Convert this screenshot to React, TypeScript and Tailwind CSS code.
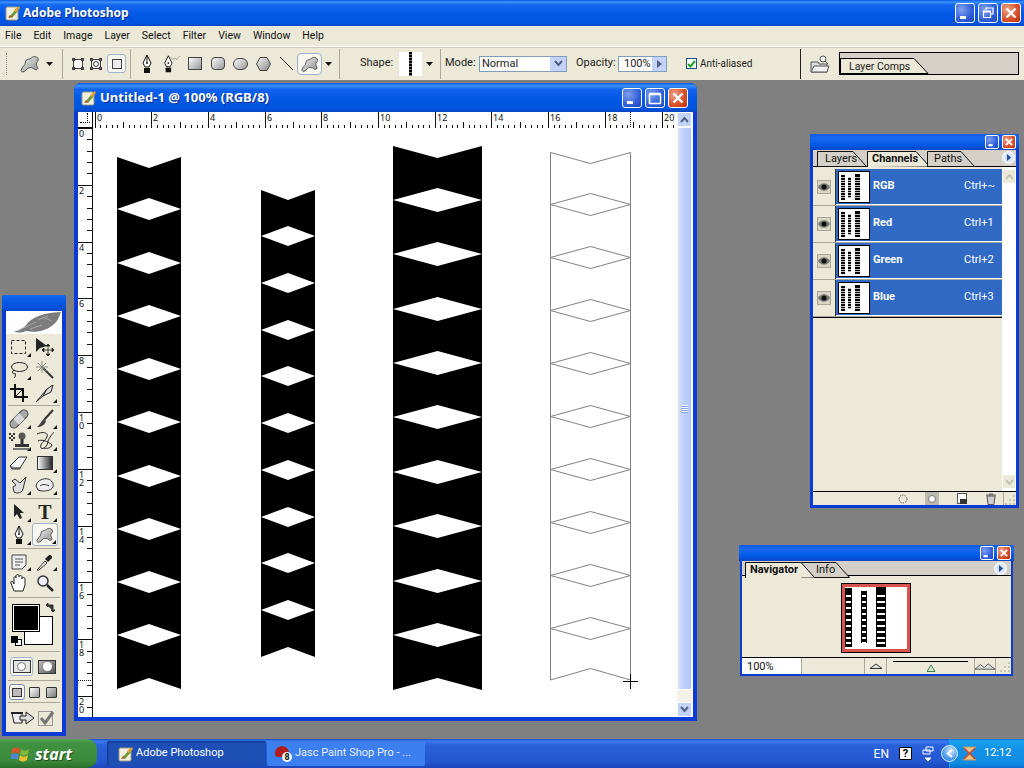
import type { ReactNode } from "react";

const blob =
  "M2 18C4 13 7 13 7 9 7 5 11 7 14 4 16 2 20 3 21 5 22 8 19 9 19 11 19 14 22 15 20 17 18 19 16 15 12 15 9 15 7 20 4 20 3 20 2 19 2 18Z";

function Defs() {
  return (
    <svg className="absolute w-0 h-0">
      <defs>
        <linearGradient id="steel" x1="0" y1="0" x2="1" y2="1">
          <stop offset="0" stopColor="#f4f4f4" />
          <stop offset="1" stopColor="#8a8a8a" />
        </linearGradient>
        <linearGradient id="fade" x1="0" y1="0" x2="1" y2="0">
          <stop offset="0" stopColor="#fff" />
          <stop offset="1" stopColor="#222" />
        </linearGradient>
      </defs>
    </svg>
  );
}

function Blob({ size = 24 }: { size?: number }) {
  return (
    <svg width={size} height={size * 0.9} viewBox="0 0 24 22">
      <path d={blob} fill="url(#steel)" stroke="#444" strokeWidth="1" />
    </svg>
  );
}

function Pen() {
  return (
    <svg width="16" height="20" viewBox="0 0 16 20">
      <path d="M8 1 12 9 10 13H6L4 9Z" fill="#fff" stroke="#111" />
      <path d="M8 2V8" stroke="#111" />
      <circle cx="8" cy="9" r="1" fill="#111" />
      <rect x="5" y="14" width="6" height="5" fill="#111" />
    </svg>
  );
}

function FreePen() {
  return (
    <svg width="24" height="20" viewBox="0 0 24 20">
      <path d="M8 1 12 9 10 13H6L4 9Z" fill="#fff" stroke="#111" />
      <circle cx="8" cy="9" r="1" fill="#111" />
      <rect x="5" y="14" width="6" height="5" fill="#111" />
      <path d="M11 3 13 5 15 3 17 5 19 3 21 1" fill="none" stroke="#555" strokeDasharray="1 1" />
    </svg>
  );
}

function Caret({ className = "" }: { className?: string }) {
  return (
    <svg width="7" height="4" viewBox="0 0 7 4" className={className}>
      <path d="M0 0H7L3.500 4Z" fill="#111" />
    </svg>
  );
}

function WinButton({ kind, small }: { kind: "min" | "max" | "restore" | "close"; small?: boolean }) {
  const tone =
    kind === "close"
      ? "bg-[radial-gradient(circle_at_30%_30%,#f0a58c,#d8532e_55%,#b8300e)]"
      : "bg-[radial-gradient(circle_at_30%_30%,#7f9ff0,#2f5fd8_60%,#1c45c0)]";
  const size = small ? "w-[14px] h-[14px] rounded-[2px]" : "w-[20px] h-[20px] rounded-[3px]";
  return (
    <div className={`${size} ${tone} border border-white flex items-center justify-center shrink-0`}>
      <svg width={small ? 10 : 14} height={small ? 10 : 14} viewBox="0 0 14 14" fill="none" stroke="#fff">
        {kind === "min" && <path d="M2 11.500H8" strokeWidth="3" />}
        {kind === "max" && <path d="M1.500 3.500H12.500V12.500H1.500ZM1.500 2.500H12.500" strokeWidth="1.500" />}
        {kind === "restore" && <path d="M5 4V2H12V8H10M2.500 5H9.500V11.500H2.500ZM2.500 6H9.500" strokeWidth="1.200" />}
        {kind === "close" && <path d="M2.500 2.500 11.500 11.500M11.500 2.500 2.500 11.500" strokeWidth="2.400" />}
      </svg>
    </div>
  );
}

function PsLogo() {
  return (
    <svg width="16" height="16" viewBox="0 0 16 16" className="shrink-0">
      <rect x="1" y="2" width="12" height="13" rx="1.500" fill="#f3efe0" stroke="#9a9a80" />
      <path d="M4 12 11 4 13 6 7 13Z" fill="#6f9a3a" />
      <path d="M9 5 14 1 15 3 11 7Z" fill="#e3a12c" />
      <path d="M3 13 5 10 7 12Z" fill="#b5482a" />
    </svg>
  );
}

function TopRuler() {
  const ticks = Array.from({ length: 103 }, (_, i) => i);
  return (
    <svg width="584" height="16" className="block bg-white shrink-0">
      {ticks.map((i) => {
        const x = 1.5 + i * 5.67;
        const h = i % 10 === 0 ? 16 : i % 5 === 0 ? 6 : 3;
        return <rect key={i} x={Math.round(x)} y={16 - h} width="1" height={h} fill="#111" />;
      })}
      {ticks
        .filter((i) => i % 10 === 0)
        .map((i) => (
          <text key={i} x={Math.round(1.5 + i * 5.67) + 2} y="9" fontSize="9" fill="#111" fontFamily="Noto Sans, sans-serif">
            {i / 5}
          </text>
        ))}
      <path d="M537.500 0V16" stroke="#111" strokeDasharray="1 1" />
    </svg>
  );
}

function LeftRuler() {
  const ticks = Array.from({ length: 52 }, (_, i) => i);
  return (
    <svg width="15" height="589" className="block bg-white shrink-0">
      <rect x="14" y="0" width="1" height="589" fill="#111" />
      {ticks.map((i) => {
        const y = Math.round(i * 11.36);
        return <rect key={i} x={i % 5 === 0 ? 0 : 9} y={y} width={i % 5 === 0 ? 14 : 5} height="1" fill="#111" />;
      })}
      {ticks
        .filter((i) => i % 5 === 0)
        .map((i) => {
          const digits = String((i / 5) * 2).split("");
          return (
            <text key={i} fontSize="9" fill="#111" fontFamily="Noto Sans, sans-serif">
              {digits.map((d, n) => (
                <tspan key={n} x="1" y={Math.round(i * 11.36) + 9 + n * 8}>
                  {d}
                </tspan>
              ))}
            </text>
          );
        })}
      <path d="M0 552.500H14" stroke="#111" strokeDasharray="1 1" />
    </svg>
  );
}

type Col = {
  l: number;
  r: number;
  top: number;
  notch: number;
  half: number;
  centers: number[];
  peak: number;
  bottom: number;
};

const cols: Col[] = [
  { l: 117, r: 181, top: 157, notch: 168, half: 11, centers: [209, 263, 316, 369, 422, 476, 529, 582, 635], peak: 678, bottom: 689 },
  { l: 261, r: 315, top: 190, notch: 200, half: 10, centers: [236, 283, 330, 376, 423, 470, 517, 563, 610], peak: 647, bottom: 657 },
  { l: 393, r: 482, top: 146, notch: 158, half: 12, centers: [200, 254, 309, 363, 417, 472, 526, 581, 635], peak: 678, bottom: 690 },
];

function Diamond({ c, l, r, half }: { c: number; l: number; r: number; half: number }) {
  const m = (l + r) / 2;
  return <path d={`M${l} ${c}L${m} ${c - half}L${r} ${c}L${m} ${c + half}Z`} />;
}

function Drawing() {
  const outline = { l: 550.5, r: 630.5 };
  const mid = 590.5;
  return (
    <svg width="584" height="589" viewBox="93 128 584 589" className="block bg-white">
      {cols.map((c) => {
        const m = (c.l + c.r) / 2;
        return (
          <g key={c.l}>
            <path
              d={`M${c.l} ${c.top}L${m} ${c.notch}L${c.r} ${c.top}V${c.bottom}L${m} ${c.peak}L${c.l} ${c.bottom}Z`}
              fill="#000"
            />
            <g fill="#fff">
              {c.centers.map((y) => (
                <Diamond key={y} c={y} l={c.l} r={c.r} half={c.half} />
              ))}
            </g>
          </g>
        );
      })}
      <g fill="none" stroke="#808080">
        <path d={`M${outline.l} 152.500L${mid} 163.500L${outline.r} 152.500V680L${mid} 668.500L${outline.l} 680Z`} />
        {[204, 257, 310, 363, 416, 469, 522, 575, 628].map((y) => (
          <Diamond key={y} c={y + 0.5} l={outline.l} r={outline.r} half={11} />
        ))}
      </g>
      <path d="M623 681.500H638M630.500 674V689" stroke="#000" fill="none" />
    </svg>
  );
}

function ScrollButton({ up }: { up?: boolean }) {
  return (
    <div className="h-[15px] w-[15px] bg-[#c3d3f8] border border-white rounded-[2px] flex items-center justify-center shrink-0">
      <svg width="9" height="7" viewBox="0 0 9 7" fill="none" stroke="#4d6185" strokeWidth="2">
        <path d={up ? "M1 6 4.500 2 8 6" : "M1 1 4.500 5 8 1"} />
      </svg>
    </div>
  );
}

function Scrollbar() {
  return (
    <div className="w-[15px] h-full flex flex-col bg-[#f3f1e8] shrink-0">
      <ScrollButton up />
      <div className="flex-1 flex flex-col pb-[12px]">
        <div className="flex-1 bg-[linear-gradient(90deg,#d5e1fb,#bccffa_50%,#b2c7f6)] border border-white rounded-[2px] flex items-center justify-center">
          <div className="w-[7px] h-[8px] bg-[repeating-linear-gradient(180deg,#eef3fe_0,#eef3fe_1px,#8ba5e0_1px,#8ba5e0_2px)]" />
        </div>
      </div>
      <ScrollButton />
    </div>
  );
}

function DocWindow() {
  return (
    <div className="absolute left-[74px] top-[3px] w-[623px] h-[638px] flex flex-col bg-[#0a3bd6] rounded-t-[7px] px-[4px] pb-[4px]">
      <div className="h-[29px] -mx-[4px] px-[7px] rounded-t-[7px] flex items-center gap-[3px] bg-[linear-gradient(180deg,#0a5ae8_0%,#3c92fb_10%,#0f62ee_22%,#0058e6_60%,#0052da_90%,#0a46c4_100%)]">
        <PsLogo />
        <span className="font-['Noto_Sans',sans-serif] text-white font-bold text-[13px] [text-shadow:1px_1px_0_#0a2f90] flex-1">
          Untitled-1 @ 100% (RGB/8)
        </span>
        <div className="flex gap-[3px] pr-[2px]">
          <WinButton kind="min" />
          <WinButton kind="max" />
          <WinButton kind="close" />
        </div>
      </div>
      <div className="flex-1 flex bg-white min-h-0">
        <div className="flex flex-col">
          <div className="flex h-[16px]">
            <div className="w-[15px] h-[16px] bg-white border-r border-b border-black relative shrink-0">
              <div className="absolute left-[2px] top-[10px] w-[10px] border-t border-dotted border-black" />
              <div className="absolute left-[9px] top-[1px] h-[10px] border-l border-dotted border-black" />
            </div>
            <TopRuler />
          </div>
          <div className="flex flex-1 min-h-0">
            <LeftRuler />
            <Drawing />
          </div>
        </div>
        <Scrollbar />
      </div>
    </div>
  );
}

function Corner() {
  return (
    <svg width="4" height="4" viewBox="0 0 4 4" className="absolute right-[1px] bottom-[1px]">
      <path d="M4 0V4H0Z" fill="#111" />
    </svg>
  );
}

function Tool({ children, corner = true }: { children: ReactNode; corner?: boolean }) {
  return (
    <div className="relative w-[26px] h-full flex items-center justify-center">
      {children}
      {corner && <Corner />}
    </div>
  );
}

function Sep() {
  return <div className="mx-[2px] h-[2px] shrink-0 border-t border-[#aca899]" />;
}

const g = { fill: "none", stroke: "#222" };

function Palette() {
  return (
    <div className="absolute left-[2px] top-[215px] w-[64px] h-[441px] flex flex-col bg-[#0a3bd6] rounded-t-[3px] px-[4px] pb-[4px]">
      <div className="h-[16px] -mx-[4px] shrink-0 rounded-t-[3px] bg-[linear-gradient(180deg,#1a6af0,#0a5be8_30%,#0052dc_80%,#0a46c4)]" />
      <div className="h-[23px] shrink-0 bg-white flex justify-end overflow-hidden">
        <svg width="50" height="23" viewBox="0 0 50 23">
          <path d="M2 20C6 20 10 19 14 14 20 6 30 2 49 1 47 6 46 10 41 14 34 20 24 22 14 20 9 22 5 22 2 20Z" fill="#7c7c7c" />
          <path d="M5 20 24 11M26 9 36 5M18 18 30 14M30 6 40 10" stroke="#a8a8a8" fill="none" />
        </svg>
      </div>
      <div className="flex-1 bg-[#ece9d8] flex flex-col min-h-0">
        <div className="h-[71px] pt-[1px] shrink-0 flex flex-col">
          <div className="h-[23px] flex shrink-0">
            <Tool>
              <svg width="18" height="16"><rect x="1.500" y="1.500" width="14" height="13" {...g} strokeDasharray="3 2" /></svg>
            </Tool>
            <Tool corner={false}>
              <svg width="20" height="20" viewBox="0 0 20 20">
                <path d="M1 1V15L5 11 12 9Z" fill="#222" />
                <path d="M13 8V18M8 13H18M13 7 11 9H15ZM13 19 11 17H15ZM7 13 9 11V15ZM19 13 17 11V15Z" stroke="#222" fill="#222" strokeWidth="0.800" />
              </svg>
            </Tool>
          </div>
          <div className="h-[23px] flex shrink-0">
            <Tool>
              <svg width="20" height="18" viewBox="0 0 20 18">
                <ellipse cx="10.500" cy="6" rx="8" ry="4.500" {...g} />
                <path d="M5 9C2 11 4 14 6 12 7 15 6 16 5 17" {...g} />
              </svg>
            </Tool>
            <Tool corner={false}>
              <svg width="20" height="20" viewBox="0 0 20 20">
                <path d="M8 8 18 18" stroke="#333" strokeWidth="2" />
                <path d="M7 1V13M1 7H13M3 3 11 11M11 3 3 11" stroke="#777" strokeWidth="0.800" />
              </svg>
            </Tool>
          </div>
          <div className="h-[23px] flex shrink-0">
            <Tool corner={false}>
              <svg width="18" height="18" viewBox="0 0 18 18" stroke="#111" fill="none" strokeWidth="2">
                <path d="M5 0V13H18M0 5H13V18" />
                <path d="M5 13 13 5" strokeWidth="1" />
              </svg>
            </Tool>
            <Tool>
              <svg width="20" height="20" viewBox="0 0 20 20">
                <path d="M1 19 12 6 18 2 16 9 8 13Z" fill="#ddd" stroke="#222" />
                <path d="M12 6 8 13" stroke="#222" />
              </svg>
            </Tool>
          </div>
        </div>
        <Sep />
        <div className="h-[91px] pt-[1px] shrink-0 flex flex-col">
          <div className="h-[22px] flex shrink-0">
            <Tool>
              <svg width="20" height="20" viewBox="0 0 20 20">
                <rect x="-1" y="6" width="22" height="8" rx="4" transform="rotate(-45 10 10)" fill="#a8a8a8" stroke="#444" />
                <rect x="6" y="6" width="8" height="8" transform="rotate(-45 10 10)" fill="#d8d8d8" />
              </svg>
            </Tool>
            <Tool>
              <svg width="20" height="20" viewBox="0 0 20 20">
                <path d="M18 1 9 11" stroke="#333" strokeWidth="2" />
                <path d="M9 10 11 12C10 16 6 18 2 18 5 16 6 12 9 10Z" fill="#444" />
              </svg>
            </Tool>
          </div>
          <div className="h-[22px] flex shrink-0">
            <Tool>
              <svg width="22" height="20" viewBox="0 0 22 20">
                <circle cx="14" cy="5" r="3.500" fill="#555" />
                <path d="M14 8V13" stroke="#333" strokeWidth="3" />
                <rect x="7" y="13" width="14" height="3" fill="#333" />
                <rect x="5" y="17" width="16" height="2" fill="#777" />
                <path d="M1 2H3V4H1ZM5 2H7V4H5ZM3 4H5V6H3ZM1 6H3V8H1ZM5 6H7V8H5ZM3 8H5V10H3Z" fill="#333" />
              </svg>
            </Tool>
            <Tool>
              <svg width="20" height="20" viewBox="0 0 20 20" {...g}>
                <path d="M2 3C8 0 14 2 12 6 10 10 4 13 6 17 8 19 13 15 13 10 14 7 18 2 19 1" />
                <path d="M3 10C6 8 13 10 17 14 16 17 12 18 9 17" />
              </svg>
            </Tool>
          </div>
          <div className="h-[22px] flex shrink-0">
            <Tool corner={false}>
              <svg width="20" height="16" viewBox="0 0 20 16">
                <path d="M1 11 10 2H18L11 13H3Z" fill="#f4f4f4" stroke="#333" />
                <path d="M1 11 3 14H11V13" fill="#888" stroke="#333" />
              </svg>
            </Tool>
            <Tool>
              <svg width="16" height="14"><rect x="0.500" y="0.500" width="15" height="13" fill="url(#fade)" stroke="#333" /></svg>
            </Tool>
          </div>
          <div className="h-[22px] flex shrink-0">
            <Tool>
              <svg width="18" height="20" viewBox="0 0 18 20">
                <path d="M16 2 10 8 5 4 2 6 6 10 3 12 4 17C7 19 12 18 13 14Z" fill="#ddd" stroke="#333" />
              </svg>
            </Tool>
            <Tool>
              <svg width="20" height="16" viewBox="0 0 20 16">
                <path d="M1 9C2 3 9 1 13 2 17 3 19 7 18 10 16 14 8 15 3 13Z" fill="#eee" stroke="#333" />
                <path d="M5 9C7 7 11 7 14 9" fill="none" stroke="#333" />
              </svg>
            </Tool>
          </div>
        </div>
        <Sep />
        <div className="h-[48px] shrink-0 flex flex-col">
          <div className="h-[23px] flex shrink-0">
            <Tool>
              <svg width="12" height="17" viewBox="0 0 12 17">
                <path d="M1 1V14L4 11 7 16 9 15 7 10H11Z" fill="#222" />
              </svg>
            </Tool>
            <Tool>
              <span className="font-['Liberation_Serif',serif] font-bold text-[20px] leading-none text-[#222]">T</span>
            </Tool>
          </div>
          <div className="h-[23px] flex shrink-0">
            <Tool>
              <Pen />
            </Tool>
            <div className="relative w-[26px] h-full flex items-center justify-center bg-white/60 border border-[#9db2c8] rounded-[3px]">
              <Blob size={20} />
              <Corner />
            </div>
          </div>
        </div>
        <Sep />
        <div className="h-[47px] pt-[1px] shrink-0 flex flex-col">
          <div className="h-[21px] flex shrink-0">
            <Tool>
              <svg width="16" height="16" viewBox="0 0 16 16">
                <path d="M1 1H15V11L11 15H1Z" fill="#eee" stroke="#444" />
                <path d="M4 5H12M4 8H12M4 11H9" stroke="#555" />
              </svg>
            </Tool>
            <Tool>
              <svg width="18" height="18" viewBox="0 0 18 18">
                <path d="M1 17 9 8 11 10 3 17Z" fill="#fff" stroke="#222" />
                <path d="M9 6 12 3C14 0 18 4 15 6L12 9Z" fill="#222" />
              </svg>
            </Tool>
          </div>
          <div className="h-[21px] flex shrink-0">
            <Tool corner={false}>
              <svg width="18" height="18" viewBox="0 0 18 18">
                <path d="M4 17 1 9C0 7 2 7 3 8L4 10V4C4 2 6 2 6 4V2C6 0 9 0 9 2V3C9 1 12 1 12 3V5C12 3 15 3 15 5V11L13 17Z" fill="#fff" stroke="#222" />
              </svg>
            </Tool>
            <Tool corner={false}>
              <svg width="18" height="18" viewBox="0 0 18 18">
                <circle cx="7" cy="7" r="5" fill="#eef" stroke="#333" strokeWidth="1.500" />
                <path d="M11 11 17 17" stroke="#222" strokeWidth="2.500" />
              </svg>
            </Tool>
          </div>
        </div>
        <Sep />
        <div className="h-[52px] shrink-0 relative">
          <div className="absolute left-[18px] top-[17px] w-[29px] h-[29px] bg-white border border-black" />
          <div className="absolute left-[6px] top-[5px] w-[28px] h-[28px] bg-black border border-black shadow-[inset_0_0_0_1px_#fff]" />
          <svg width="11" height="11" viewBox="0 0 11 11" className="absolute left-[39px] top-[3px]" fill="none" stroke="#333">
            <path d="M2 3H8V9M1 3 3 1V5ZM8 10 6 8H10Z" fill="#333" />
          </svg>
          <div className="absolute left-[9px] top-[40px] w-[7px] h-[7px] bg-white border border-black" />
          <div className="absolute left-[5px] top-[37px] w-[7px] h-[7px] bg-black" />
        </div>
        <Sep />
        <div className="h-[27px] shrink-0 flex items-center gap-[5px] pl-[4px]">
          <div className="w-[23px] h-[19px] bg-white/60 border border-[#9db2c8] rounded-[3px] flex items-center justify-center">
            <div className="w-[18px] h-[13px] border border-[#333] bg-[#e4e4e4] flex items-center justify-center">
              <div className="w-[9px] h-[9px] rounded-full bg-white border border-[#777]" />
            </div>
          </div>
          <div className="w-[18px] h-[14px] border border-[#333] bg-[linear-gradient(135deg,#bbb,#555)] flex items-center justify-center">
            <div className="w-[9px] h-[9px] rounded-full bg-white" />
          </div>
        </div>
        <Sep />
        <div className="h-[20px] shrink-0 flex items-center gap-[4px] pl-[3px]">
          <div className="w-[16px] h-[16px] bg-white/50 border border-[#7d8fa8] rounded-[3px] flex items-center justify-center">
            <div className="w-[10px] h-[9px] border border-[#333] bg-[#bbb]" />
          </div>
          <div className="w-[11px] h-[11px] border border-[#333] rounded-[1px] bg-[linear-gradient(135deg,#fff,#999)]" />
          <div className="w-[11px] h-[11px] border border-[#333] rounded-[1px] ml-[2px] bg-[linear-gradient(135deg,#ddd,#777)]" />
        </div>
        <Sep />
        <div className="flex-1 flex items-center gap-[3px] pl-[5px]">
          <svg width="24" height="16" viewBox="0 0 24 16">
            <path d="M1 3H11V13H3Z" fill="#eee" stroke="#222" />
            <rect x="0" y="2" width="12" height="2" fill="#222" />
            <path d="M9 6H15V2L23 8 15 14V10H9Z" fill="#ddd" stroke="#222" />
          </svg>
          <svg width="17" height="17" viewBox="0 0 17 17">
            <rect x="0.500" y="1.500" width="14" height="14" fill="#ece9d8" stroke="#999" />
            <path d="M3 8 7 13 15 2" fill="none" stroke="#777" strokeWidth="3" />
          </svg>
        </div>
      </div>
    </div>
  );
}

function Tab({
  label,
  width,
  active,
  className,
  textClass,
}: {
  label: string;
  width: number;
  active?: boolean;
  className: string;
  textClass: string;
}) {
  return (
    <div className={`relative h-full shrink-0 ${className}`}>
      <svg width={width} height="17" viewBox={`0 0 ${width} 17`} className="absolute left-0 top-0">
        <path
          d={`M0.500 17V1.500H${width - 14}L${width - 0.5} 16.500${active ? "" : "H0.500"}`}
          fill={active ? "#ece9d8" : "#d4d0c8"}
          stroke="#111"
        />
      </svg>
      <span className={`absolute top-[1px] leading-[16px] text-[11px] text-[#111] ${active ? "font-bold" : ""} ${textClass}`}>
        {label}
      </span>
    </div>
  );
}

function MenuDot() {
  return (
    <div className="w-[13px] h-[13px] rounded-full bg-[radial-gradient(circle,#c8d8fa,#f2f6ff)] border border-white flex items-center justify-center">
      <svg width="4" height="7" viewBox="0 0 4 7">
        <path d="M0 0 4 3.500 0 7Z" fill="#244a9c" />
      </svg>
    </div>
  );
}

function PanelTitle() {
  return (
    <div className="h-[16px] -mx-[3px] shrink-0 flex items-center justify-end gap-[3px] pr-[3px] rounded-t-[2px] bg-[linear-gradient(180deg,#0a5ae8,#1a6af0_25%,#0058e6_70%,#0a46c4)]">
      <WinButton kind="min" small />
      <WinButton kind="close" small />
    </div>
  );
}

function MiniBars() {
  const bars = [
    { x: 2, w: 4, y: 3, h: 25 },
    { x: 9, w: 3, y: 6, h: 20 },
    { x: 16, w: 5, y: 2, h: 26 },
  ];
  const stripes = [5, 8, 10, 13, 15, 18, 20, 23, 25];
  return (
    <svg width="30" height="30" viewBox="0 0 30 30" className="block">
      {bars.map((b) => (
        <g key={b.x}>
          <rect x={b.x} y={b.y} width={b.w} height={b.h} fill="#000" />
          {stripes.map((y) => (
            <rect key={y} x={b.x} y={y} width={b.w} height="1" fill="#bbb" />
          ))}
        </g>
      ))}
    </svg>
  );
}

function ChannelRow({ name, keys }: { name: string; keys: string }) {
  return (
    <div className="h-[37px] shrink-0 flex border-b border-[#aca899]">
      <div className="w-[23px] shrink-0 flex items-center justify-center border-r border-[#333]">
        <div className="w-[14px] h-[14px] bg-[#d8d5c4] border border-[#aca899] flex items-center justify-center">
          <svg width="12" height="8" viewBox="0 0 12 8">
            <path d="M0 4C3 -1 9 -1 12 4 9 9 3 9 0 4Z" fill="#777" />
            <circle cx="6" cy="4" r="2.500" fill="#111" />
          </svg>
        </div>
      </div>
      <div className="flex-1 flex items-center bg-[#316ac5] border-b border-white text-white pl-[2px]">
        <div className="w-[32px] h-[32px] bg-white border border-black shrink-0">
          <MiniBars />
        </div>
        <span className="ml-[3px] w-[91px] text-[11px] font-bold">{name}</span>
        <span className="text-[11px]">{keys}</span>
      </div>
    </div>
  );
}

function Grip() {
  return (
    <svg width="12" height="12" viewBox="0 0 12 12" className="ml-auto">
      <path d="M9 2H11V4H9ZM9 6H11V8H9ZM5 6H7V8H5ZM9 10H11V12H9ZM5 10H7V12H5ZM1 10H3V12H1Z" fill="#c6c3ae" />
    </svg>
  );
}

function ChannelsPanel() {
  return (
    <div className="absolute left-[810px] top-[54px] w-[209px] h-[374px] flex flex-col bg-[#0a3bd6] rounded-t-[2px] px-[3px] pb-[3px]">
      <PanelTitle />
      <div className="flex-1 flex flex-col bg-[#ece9d8] min-h-0">
        <div className="h-[17px] shrink-0 flex items-center bg-[#d4d0c8] border-b border-black pl-[4px] relative">
          <Tab label="Layers" width={50} className="w-[50px]" textClass="left-[8px]" />
          <Tab label="Paths" width={48} className="w-[48px] order-3 -ml-[3px]" textClass="left-[7px]" />
          <Tab label="Channels" width={63} active className="w-[63px] order-2" textClass="left-[5px]" />
          <div className="absolute right-[1px] top-[1px]">
            <MenuDot />
          </div>
        </div>
        <div className="flex-1 flex min-h-0">
          <div className="flex-1 flex flex-col min-w-0 pt-[2px]">
            <ChannelRow name="RGB" keys="Ctrl+~" />
            <ChannelRow name="Red" keys="Ctrl+1" />
            <ChannelRow name="Green" keys="Ctrl+2" />
            <ChannelRow name="Blue" keys="Ctrl+3" />
            <div className="border-t border-black" />
          </div>
          <div className="w-[14px] shrink-0 bg-white flex flex-col justify-between px-[1px] py-[3px]">
            <div className="h-[13px] bg-[#ece9d8] flex items-center justify-center">
              <svg width="9" height="6" viewBox="0 0 9 6" fill="none" stroke="#c4c2b2" strokeWidth="2"><path d="M1 5 4.500 1 8 5" /></svg>
            </div>
            <div className="h-[13px] bg-[#ece9d8] flex items-center justify-center">
              <svg width="9" height="6" viewBox="0 0 9 6" fill="none" stroke="#c4c2b2" strokeWidth="2"><path d="M1 1 4.500 5 8 1" /></svg>
            </div>
          </div>
        </div>
        <div className="h-[14px] shrink-0 flex items-center border-t border-black">
          <div className="w-[191px] h-full flex items-center border-r border-[#aca899]">
            <svg width="10" height="10" viewBox="0 0 10 10" className="ml-[85px]"><circle cx="5" cy="5" r="4" fill="none" stroke="#555" strokeDasharray="1.500 1" /></svg>
            <div className="ml-[17px] w-[14px] h-[13px] bg-[#bdbbae] flex items-center justify-center">
              <div className="w-[8px] h-[8px] rounded-full bg-white border border-[#777]" />
            </div>
            <svg width="10" height="11" viewBox="0 0 10 11" className="ml-[18px]">
              <rect x="0.500" y="0.500" width="9" height="10" fill="#fff" stroke="#555" />
              <path d="M3 6H10V11H3Z" fill="#333" />
            </svg>
            <svg width="10" height="12" viewBox="0 0 10 12" className="ml-[19px]">
              <path d="M1 3H9L8 11.500H2ZM0 2H10M3 1H7" fill="#ccc" stroke="#555" />
            </svg>
          </div>
          <Grip />
        </div>
      </div>
    </div>
  );
}

function Mountain({ big }: { big?: boolean }) {
  return big ? (
    <svg width="26" height="9" viewBox="0 0 26 9">
      <path d="M0 8 7 2 12 6 17 1 26 8Z" fill="#ddd" stroke="#333" />
    </svg>
  ) : (
    <svg width="12" height="6" viewBox="0 0 12 6">
      <path d="M0 5.500 6 1 12 5.500Z" fill="#ddd" stroke="#333" />
    </svg>
  );
}

function NavigatorPanel() {
  return (
    <div className="absolute left-[740px] top-[465px] w-[273px] h-[131px] flex flex-col bg-[#0a3bd6] rounded-t-[2px] px-[2px] pb-[2px]">
      <PanelTitle />
      <div className="flex-1 flex flex-col bg-[#ece9d8] min-h-0">
        <div className="h-[15px] shrink-0 flex bg-[#d4d0c8] border-b border-black pl-[3px] relative">
          <Tab label="Info" width={49} className="w-[49px] order-2 -ml-[14px]" textClass="left-[15px]" />
          <Tab label="Navigator" width={70} active className="w-[70px] z-10" textClass="left-[5px]" />
          <div className="absolute right-[4px] top-[1px]">
            <MenuDot />
          </div>
        </div>
        <div className="flex-1 flex justify-center pt-[7px] pr-[2px] min-h-0">
          <div className="w-[70px] h-[70px] bg-white border border-black shadow-[inset_0_0_0_3px_#d9534f] p-[3px]">
            <svg width="62" height="62" viewBox="0 0 62 62">
              {[{ x: 0, w: 7, y: 1, h: 59 }, { x: 16, w: 6, y: 4, h: 52 }, { x: 31, w: 10, y: 0, h: 60 }].map((b) => (
                <g key={b.x}>
                  <rect x={b.x} y={b.y} width={b.w} height={b.h} fill="#000" />
                  {[8, 14, 20, 26, 32, 38, 44, 50, 55].map((y) => (
                    <rect key={y} x={b.x + 1} y={y} width={b.w - 2} height="2" fill="#fff" />
                  ))}
                </g>
              ))}
            </svg>
          </div>
        </div>
        <div className="h-[17px] shrink-0 flex items-center border-t border-black">
          <div className="w-[60px] h-full bg-white border-r border-[#aca899] text-[11px] leading-[17px] pl-[5px] text-[#111]">100%</div>
          <div className="w-[63px] h-full border-r border-[#aca899]" />
          <div className="w-[22px] h-full flex items-center justify-center border-r border-[#aca899]">
            <Mountain />
          </div>
          <div className="w-[87px] h-full flex flex-col items-center">
            <div className="w-[75px] border-t border-black mt-[3px]" />
            <svg width="10" height="8" viewBox="0 0 10 8" className="mt-[2px]">
              <path d="M1 7.500 5 1 9 7.500Z" fill="#cfe6cf" stroke="#3f7a4a" />
            </svg>
          </div>
          <div className="w-[22px] h-full flex items-center justify-center border-x border-[#aca899]">
            <Mountain big />
          </div>
          <Grip />
        </div>
      </div>
    </div>
  );
}

function OptionSep() {
  return <div className="w-[2px] h-[30px] border-l border-[#aca899] shrink-0" />;
}

function ShapeIcon({ children }: { children: ReactNode }) {
  return <div className="w-[23px] shrink-0 flex items-center justify-center">{children}</div>;
}

function OptionsBar() {
  return (
    <div className="h-[34px] shrink-0 bg-[#ece9d8] border-t border-[#fff] shadow-[inset_0_1px_0_#cfccba] flex items-center text-[11px] text-[#222]">
      <div className="w-[18px] shrink-0 flex justify-center">
        <div className="h-[22px] border-l border-dotted border-[#888] -ml-[6px]" />
      </div>
      <div className="w-[24px] flex justify-center shrink-0">
        <Blob size={22} />
      </div>
      <div className="w-[14px] flex justify-center shrink-0">
        <Caret />
      </div>
      <div className="w-[6px] shrink-0" />
      <OptionSep />
      <div className="w-[4px] shrink-0" />
      <div className="w-[20px] flex justify-center shrink-0">
        <svg width="14" height="14"><rect x="2.500" y="2.500" width="9" height="9" fill="#f4f4f4" stroke="#444" /><path d="M1 1H4V4H1ZM10 1H13V4H10ZM1 10H4V13H1ZM10 10H13V13H10Z" fill="#444" /></svg>
      </div>
      <div className="w-[16px] flex justify-center shrink-0">
        <svg width="14" height="14"><rect x="2.500" y="2.500" width="9" height="9" fill="#f4f4f4" stroke="#444" /><path d="M1 1H4V4H1ZM10 1H13V4H10ZM1 10H4V13H1ZM10 10H13V13H10Z" fill="#444" /><circle cx="7" cy="7" r="2.500" fill="none" stroke="#444" /></svg>
      </div>
      <div className="w-[19px] h-[19px] ml-[3px] bg-white/60 border border-[#9db2c8] rounded-[3px] flex items-center justify-center shrink-0">
        <div className="w-[10px] h-[10px] border border-[#444] bg-[#eee]" />
      </div>
      <div className="w-[4px] shrink-0" />
      <OptionSep />
      <div className="w-[5px] shrink-0" />
      <div className="w-[20px] flex justify-center shrink-0"><Pen /></div>
      <div className="w-[4px] shrink-0" />
      <div className="w-[22px] flex justify-center shrink-0"><FreePen /></div>
      <ShapeIcon><div className="w-[14px] h-[13px] border border-[#444] bg-[linear-gradient(135deg,#fafafa,#999)]" /></ShapeIcon>
      <ShapeIcon><div className="w-[14px] h-[13px] border border-[#444] rounded-[4px] bg-[linear-gradient(135deg,#fafafa,#999)]" /></ShapeIcon>
      <ShapeIcon><div className="w-[15px] h-[12px] border border-[#444] rounded-full bg-[linear-gradient(135deg,#fafafa,#999)]" /></ShapeIcon>
      <ShapeIcon>
        <svg width="15" height="14" viewBox="0 0 15 14"><path d="M4 .500H11L14.500 7 11 13.500H4L.500 7Z" fill="url(#steel)" stroke="#444" /></svg>
      </ShapeIcon>
      <ShapeIcon>
        <svg width="15" height="15" viewBox="0 0 15 15"><path d="M1 1 14 14" stroke="#222" /></svg>
      </ShapeIcon>
      <div className="w-[25px] h-[22px] -ml-[1px] bg-white/60 border border-[#9db2c8] rounded-[4px] flex items-center justify-center shrink-0">
        <Blob size={20} />
      </div>
      <div className="w-[13px] flex justify-center shrink-0"><Caret /></div>
      <div className="w-[4px] shrink-0" />
      <OptionSep />
      <span className="ml-[19px] w-[39px] shrink-0">Shape:</span>
      <div className="w-[23px] h-[24px] bg-white flex justify-center shrink-0">
        <div className="w-[3px] h-full bg-[repeating-linear-gradient(180deg,#000_0,#000_2px,#777_2px,#777_3px)]" />
      </div>
      <div className="w-[12px] ml-[1px] flex justify-center shrink-0"><Caret /></div>
      <div className="w-[5px] shrink-0" />
      <OptionSep />
      <span className="ml-[3px] w-[34px] shrink-0">Mode:</span>
      <div className="w-[88px] h-[16px] bg-white border border-[#7f9db9] flex items-center pl-[2px] shrink-0">
        <span className="flex-1 leading-none">Normal</span>
        <div className="w-[16px] h-[14px] bg-[#c3d3f8] rounded-[1px] flex items-center justify-center">
          <svg width="9" height="7" viewBox="0 0 9 7" fill="none" stroke="#4d6185" strokeWidth="2"><path d="M1 1 4.500 5 8 1" /></svg>
        </div>
      </div>
      <span className="ml-[9px] w-[42px] shrink-0">Opacity:</span>
      <div className="w-[49px] h-[16px] bg-white border border-[#7f9db9] flex items-center shrink-0">
        <span className="flex-1 pl-[5px] leading-none">100%</span>
        <div className="w-[14px] h-[14px] bg-[#c3d3f8] flex items-center justify-center">
          <svg width="5" height="8" viewBox="0 0 5 8"><path d="M0 0 5 4 0 8Z" fill="#4d6185" /></svg>
        </div>
      </div>
      <div className="ml-[19px] w-[11px] h-[11px] bg-white border border-[#1c5180] flex items-center justify-center shrink-0">
        <svg width="9" height="8" viewBox="0 0 9 8" fill="none" stroke="#21a121" strokeWidth="2"><path d="M1 4 3.500 6.500 8 1" /></svg>
      </div>
      <span className="ml-[3px] w-[100px] shrink-0 text-[10px]">Anti-aliased</span>
      <div className="w-px h-[30px] bg-[#222] shrink-0" />
      <div className="w-[38px] flex justify-center shrink-0">
        <svg width="20" height="20" viewBox="0 0 20 20">
          <path d="M1 8H8L9 10H17V18H1Z" fill="#ddd" stroke="#555" />
          <path d="M1 18 4 12H19L17 18Z" fill="#f2f2f2" stroke="#555" />
          <circle cx="13" cy="5" r="3" fill="#f6f6f6" stroke="#555" />
          <path d="M15 7 18 10" stroke="#555" />
        </svg>
      </div>
      <div className="relative w-[180px] h-[23px] bg-[#d4d0c8] border border-black shrink-0">
        <svg width="90" height="16" viewBox="0 0 90 16" className="absolute left-0 bottom-0">
          <path d="M0.500 16V.500H74L88 15.500H0.500" fill="#ece9d8" stroke="#000" />
        </svg>
        <span className="absolute left-[9px] top-[6px] leading-[16px] text-[10.5px]">Layer Comps</span>
      </div>
    </div>
  );
}

function Taskbar() {
  return (
    <div className="h-[29px] shrink-0 flex items-stretch bg-[linear-gradient(180deg,#1f4fc4_0%,#3a7bf0_8%,#2a62dc_20%,#2456d0_80%,#1c45ba_100%)] text-white text-[11px]">
      <div className="w-[97px] shrink-0 flex items-center gap-[5px] pl-[11px] rounded-r-[10px] bg-[linear-gradient(180deg,#5aa25a_0%,#3f923f_15%,#3c8a3c_75%,#2a6e2a_100%)]">
        <svg width="19" height="18" viewBox="0 0 19 18">
          <path d="M1 4C4 2 6 2 9 4L8 9C5 7 3 7 0 9Z" fill="#d9562c" />
          <path d="M10 4C13 6 15 6 18 4L17 9C14 11 12 11 9 9Z" fill="#7fb93a" />
          <path d="M0 10C3 8 5 8 8 10L7 15C4 13 2 13-1 15Z" fill="#4f86d8" />
          <path d="M9 10C12 12 14 12 17 10L16 15C13 17 11 17 8 15Z" fill="#e6c12c" />
        </svg>
        <span className="font-['Noto_Sans',sans-serif] italic font-bold text-[16px] leading-none [text-shadow:1px_1px_1px_#1c4a1c]">start</span>
      </div>
      <div className="w-[10px] shrink-0" />
      <div className="w-[159px] shrink-0 my-[2px] flex items-center gap-[2px] pl-[11px] bg-[#1e4fb4] rounded-[2px] shadow-[inset_1px_1px_2px_#123a8a]">
        <PsLogo />
        <span>Adobe Photoshop</span>
      </div>
      <div className="w-[158px] shrink-0 my-[2px] ml-[1px] flex items-center gap-[3px] pl-[8px] bg-[#3c7fef] rounded-[2px]">
        <div className="relative w-[17px] h-[16px] shrink-0">
          <div className="w-[14px] h-[11px] rounded-t-[7px] rounded-bl-[3px] bg-[#b11d1d]" />
          <div className="absolute right-0 bottom-0 w-[10px] h-[10px] rounded-full bg-white text-[#111] font-bold text-[9px] leading-[10px] text-center">8</div>
        </div>
        <span className="text-[#e6eefc]">Jasc Paint Shop Pro - ...</span>
      </div>
      <div className="flex-1 flex items-center justify-end">
        <span className="text-[12px] mr-[10px]">EN</span>
        <div className="w-[13px] h-[13px] bg-white border border-black rounded-[1px] text-black font-bold text-[11px] leading-[11px] text-center mr-[10px]">?</div>
        <svg width="12" height="18" viewBox="0 0 12 18" className="mr-[15px]" fill="none" stroke="#fff">
          <path d="M4 2H11V6H4ZM1 5H8V9H1Z" />
          <path d="M3 13H9L6 16Z" fill="#fff" />
        </svg>
      </div>
      <div className="relative w-[75px] shrink-0 flex items-center pl-[12px] border-l border-[#12a0ee] bg-[linear-gradient(180deg,#0c74dc_0%,#18a3f0_8%,#1292e8_30%,#0f8ce2_85%,#0a6cd0_100%)]">
        <div className="absolute -left-[9px] top-[6px] w-[17px] h-[17px] rounded-full bg-[radial-gradient(circle_at_60%_30%,#cfe7ff,#3a8fe8_70%)] border border-[#dbeeff] flex items-center justify-center">
          <svg width="7" height="9" viewBox="0 0 7 9" fill="none" stroke="#fff" strokeWidth="2"><path d="M6 1 2 4.500 6 8" /></svg>
        </div>
        <svg width="15" height="15" viewBox="0 0 15 15" className="shrink-0">
          <path d="M1 1H14L1 14H14Z" fill="#e8c98a" stroke="#b9986a" />
          <path d="M2 2 13 13M13 2 2 13" stroke="#d8452a" strokeWidth="1.600" />
        </svg>
        <span className="ml-[7px]">12:12</span>
      </div>
    </div>
  );
}

export default function App() {
  return (
    <div className="w-[1024px] h-[768px] overflow-hidden flex flex-col bg-[#808080] font-['Roboto',sans-serif] relative">
      <Defs />
      <div className="h-[26px] shrink-0 flex items-center pl-[5px] pr-[3px] gap-[2px] bg-[linear-gradient(180deg,#0a5ae8_0%,#3c92fb_8%,#1668f0_18%,#0058e8_55%,#0054e0_90%,#0046c4_100%)]">
        <PsLogo />
        <span className="flex-1 font-['Noto_Sans',sans-serif] text-white font-bold text-[12px] [text-shadow:1px_1px_0_#0a2f90]">Adobe Photoshop</span>
        <div className="flex gap-[3px]">
          <WinButton kind="min" />
          <WinButton kind="restore" />
          <WinButton kind="close" />
        </div>
      </div>
      <div className="h-[20px] shrink-0 bg-[#ece9d8] flex items-center pl-[5px] gap-[12px] text-[10.5px] text-[#111]">
        {["File", "Edit", "Image", "Layer", "Select", "Filter", "View", "Window", "Help"].map((m) => (
          <span key={m} className="leading-none">{m}</span>
        ))}
      </div>
      <OptionsBar />
      <div className="flex-1 relative min-h-0">
        <DocWindow />
        <Palette />
        <ChannelsPanel />
        <NavigatorPanel />
      </div>
      <Taskbar />
    </div>
  );
}
